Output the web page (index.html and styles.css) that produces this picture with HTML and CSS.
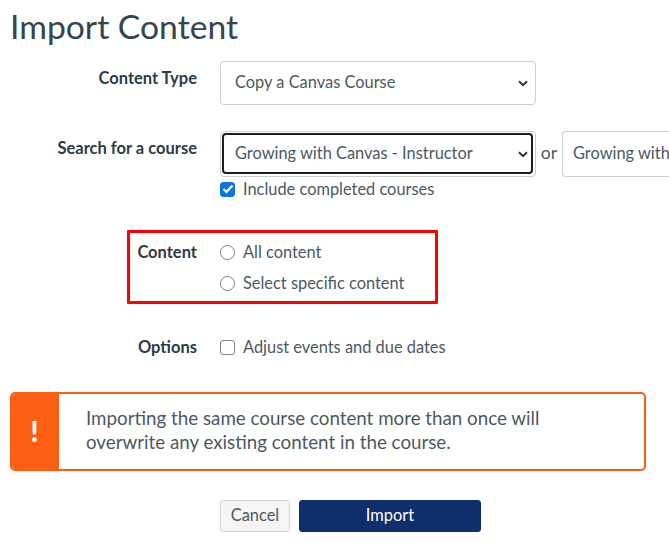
FILE: index.html
```html
<!DOCTYPE html>
<html lang="en">
<head>
<meta charset="utf-8">
<title>Import Content</title>
<link rel="stylesheet" href="styles.css">
</head>
<body>
<main class="page">
  <h1 class="title">Import Content</h1>
  <div class="row row-type">
    <div class="label">Content Type</div>
    <div class="select">
      <span>Copy a Canvas Course</span>
      <svg class="chev" width="10" height="7" viewBox="0 0 10 7"><path d="M1 1.2l4 4 4-4" fill="none" stroke="#2d3b45" stroke-width="2"/></svg>
    </div>
  </div>
  <div class="row row-search">
    <div class="label">Search for a course</div>
    <div class="search-col">
      <div class="search-line">
        <div class="select focus-ring">
          <div class="select-inner">
            <span>Growing with Canvas - Instructor</span>
            <svg class="chev" width="10" height="7" viewBox="0 0 10 7"><path d="M1 1.2l4 4 4-4" fill="none" stroke="#2d3b45" stroke-width="2"/></svg>
          </div>
        </div>
        <span class="or">or</span>
        <div class="text-input">Growing with</div>
      </div>
      <label class="check-line">
        <span class="checkbox checked">
          <svg width="12" height="10" viewBox="0 0 12 10"><path d="M1.5 5l3 3 6-6.5" fill="none" stroke="#fff" stroke-width="2.2"/></svg>
        </span>
        <span>Include completed courses</span>
      </label>
    </div>
  </div>
  <div class="row row-content">
    <div class="highlight"></div>
    <div class="label">Content</div>
    <div class="radios">
      <label class="check-line"><span class="radio"></span><span>All content</span></label>
      <label class="check-line"><span class="radio"></span><span>Select specific content</span></label>
    </div>
  </div>
  <div class="row row-options">
    <div class="label">Options</div>
    <label class="check-line"><span class="checkbox"></span><span>Adjust events and due dates</span></label>
  </div>
  <div class="alert">
    <div class="alert-icon">!</div>
    <p class="alert-text">Importing the same course content more than once will overwrite any existing content in the course.</p>
  </div>
  <div class="actions">
    <button class="btn btn-cancel">Cancel</button>
    <button class="btn btn-import">Import</button>
  </div>
</main>
</body>
</html>
```
FILE: styles.css
```css
* { box-sizing: border-box; }
html, body { margin: 0; padding: 0; background: #fff; overflow: hidden; }
body { width: 669px; height: 545px; font-family: Lato, "Liberation Sans", sans-serif; color: #2d3b45; font-size: 16.4px; }
.page { padding: 0 0 0 10px; }
.title { margin: 0; padding-top: 6px; height: 61px; font-size: 33.7px; line-height: 40px; font-weight: 400; color: #36444e; }
.row { display: grid; grid-template-columns: 187px 1fr; column-gap: 23px; position: relative; align-items: start; }
.label { font-weight: 700; font-size: 16.5px; text-align: right; line-height: 20px; }
.row-type { height: 70px; }
.row-type .label { padding-top: 7px; }
.select { width: 316px; height: 44px; border: 1px solid #ccd0d3; border-radius: 4px; display: flex; align-items: center; justify-content: space-between; padding: 0 7px 3px 14px; color: #4b5962; white-space: nowrap; }
.chev { flex: none; margin-top: 3px; }
.row-search { height: 100px; }
.row-search .label { padding-top: 7px; }
.search-col { display: flex; flex-direction: column; min-width: 0; }
.search-line { display: flex; align-items: center; height: 46px; }
.focus-ring { height: 46px; padding: 1px 2px 2px 1px; flex: none; }
.select-inner { width: 100%; height: 100%; border: 2px solid #1b1f23; border-radius: 4px; display: flex; align-items: center; justify-content: space-between; padding: 0 3px 2px 11px; color: #4b5962; }
.or { width: 26px; flex: none; text-align: center; font-size: 17.5px; padding-bottom: 3px; color: #4b5962; }
.text-input { width: 107px; flex: none; height: 46px; border: 1px solid #ccd0d3; border-right: none; border-radius: 4px 0 0 4px; padding: 0 0 0 10px; line-height: 41px; color: #4b5962; white-space: nowrap; overflow: hidden; }
.check-line { display: flex; align-items: center; gap: 8px; line-height: 20px; color: #4b5962; white-space: nowrap; }
.search-col .check-line { margin-top: 2px; }
.checkbox { width: 15px; height: 15px; border: 1px solid #7d868c; border-radius: 3px; display: flex; align-items: center; justify-content: center; flex: none; }
.checkbox.checked { background: #0b76e0; border-color: #0b76e0; }
.radio { width: 15px; height: 15px; border: 1px solid #7d868c; border-radius: 50%; flex: none; }
.row-content { height: 85px; padding-top: 11px; }
.radios { display: flex; flex-direction: column; gap: 11px; }
.highlight { position: absolute; left: 117px; top: -1px; width: 311px; height: 74px; border: 3px solid #f00; border-radius: 1px; }
.row-options { height: 76px; padding-top: 21px; }
.alert { display: flex; width: 636px; height: 79px; border: 2px solid #fc5e13; border-radius: 5px; overflow: hidden; }
.alert-icon { width: 47px; flex: none; background: #fc5e13; color: #fff; font-weight: 900; font-size: 28px; display: flex; align-items: center; justify-content: center; padding: 0 2px 2px 0; }
.alert-text { margin: 0; padding: 12px 70px 0 27px; font-size: 18.75px; line-height: 24px; color: #4b5962; }
.actions { display: flex; gap: 9px; margin-top: 29px; padding-left: 210px; }
.btn { height: 32px; border-radius: 3px; font-family: inherit; font-size: 16.4px; padding: 0 0 3px; }
.btn-cancel { width: 70px; background: #f5f5f5; border: 1px solid #d3d7da; color: #4b5962; }
.btn-import { width: 182px; background: #0e2e6c; border: 1px solid #0e2e6c; color: #fff; }
```
